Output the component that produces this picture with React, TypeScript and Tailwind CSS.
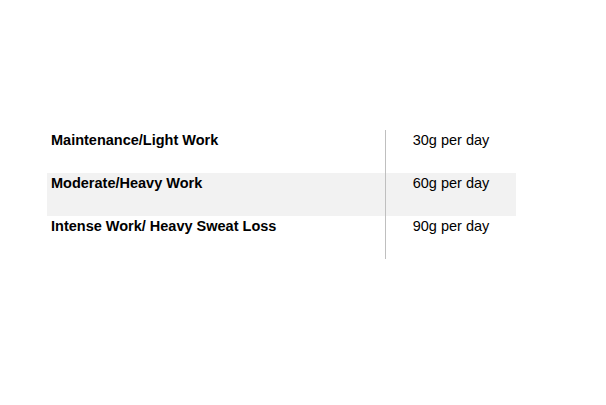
const rows = [
  { label: 'Maintenance/Light Work', amount: '30g per day' },
  { label: 'Moderate/Heavy Work', amount: '60g per day' },
  { label: 'Intense Work/ Heavy Sweat Loss', amount: '90g per day' },
];

export default function App() {
  return (
    <div className="w-[606px] h-[405px] bg-white pt-[130px] pl-[47px] font-['Liberation_Sans',Arial,sans-serif] text-[14.5px] leading-[18px] text-black">
      <div className="w-[469px] flex flex-col">
        {rows.map((row, i) => (
          <div key={i} className={`flex h-[43px] ${i === 1 ? 'bg-[#f2f2f2]' : ''}`}>
            <div className="w-[339px] pl-[4px] pt-[1px] font-bold border-r border-[#bfbfbf]">{row.label}</div>
            <div className="flex-1 pt-[1px] text-center">{row.amount}</div>
          </div>
        ))}
      </div>
    </div>
  );
}
